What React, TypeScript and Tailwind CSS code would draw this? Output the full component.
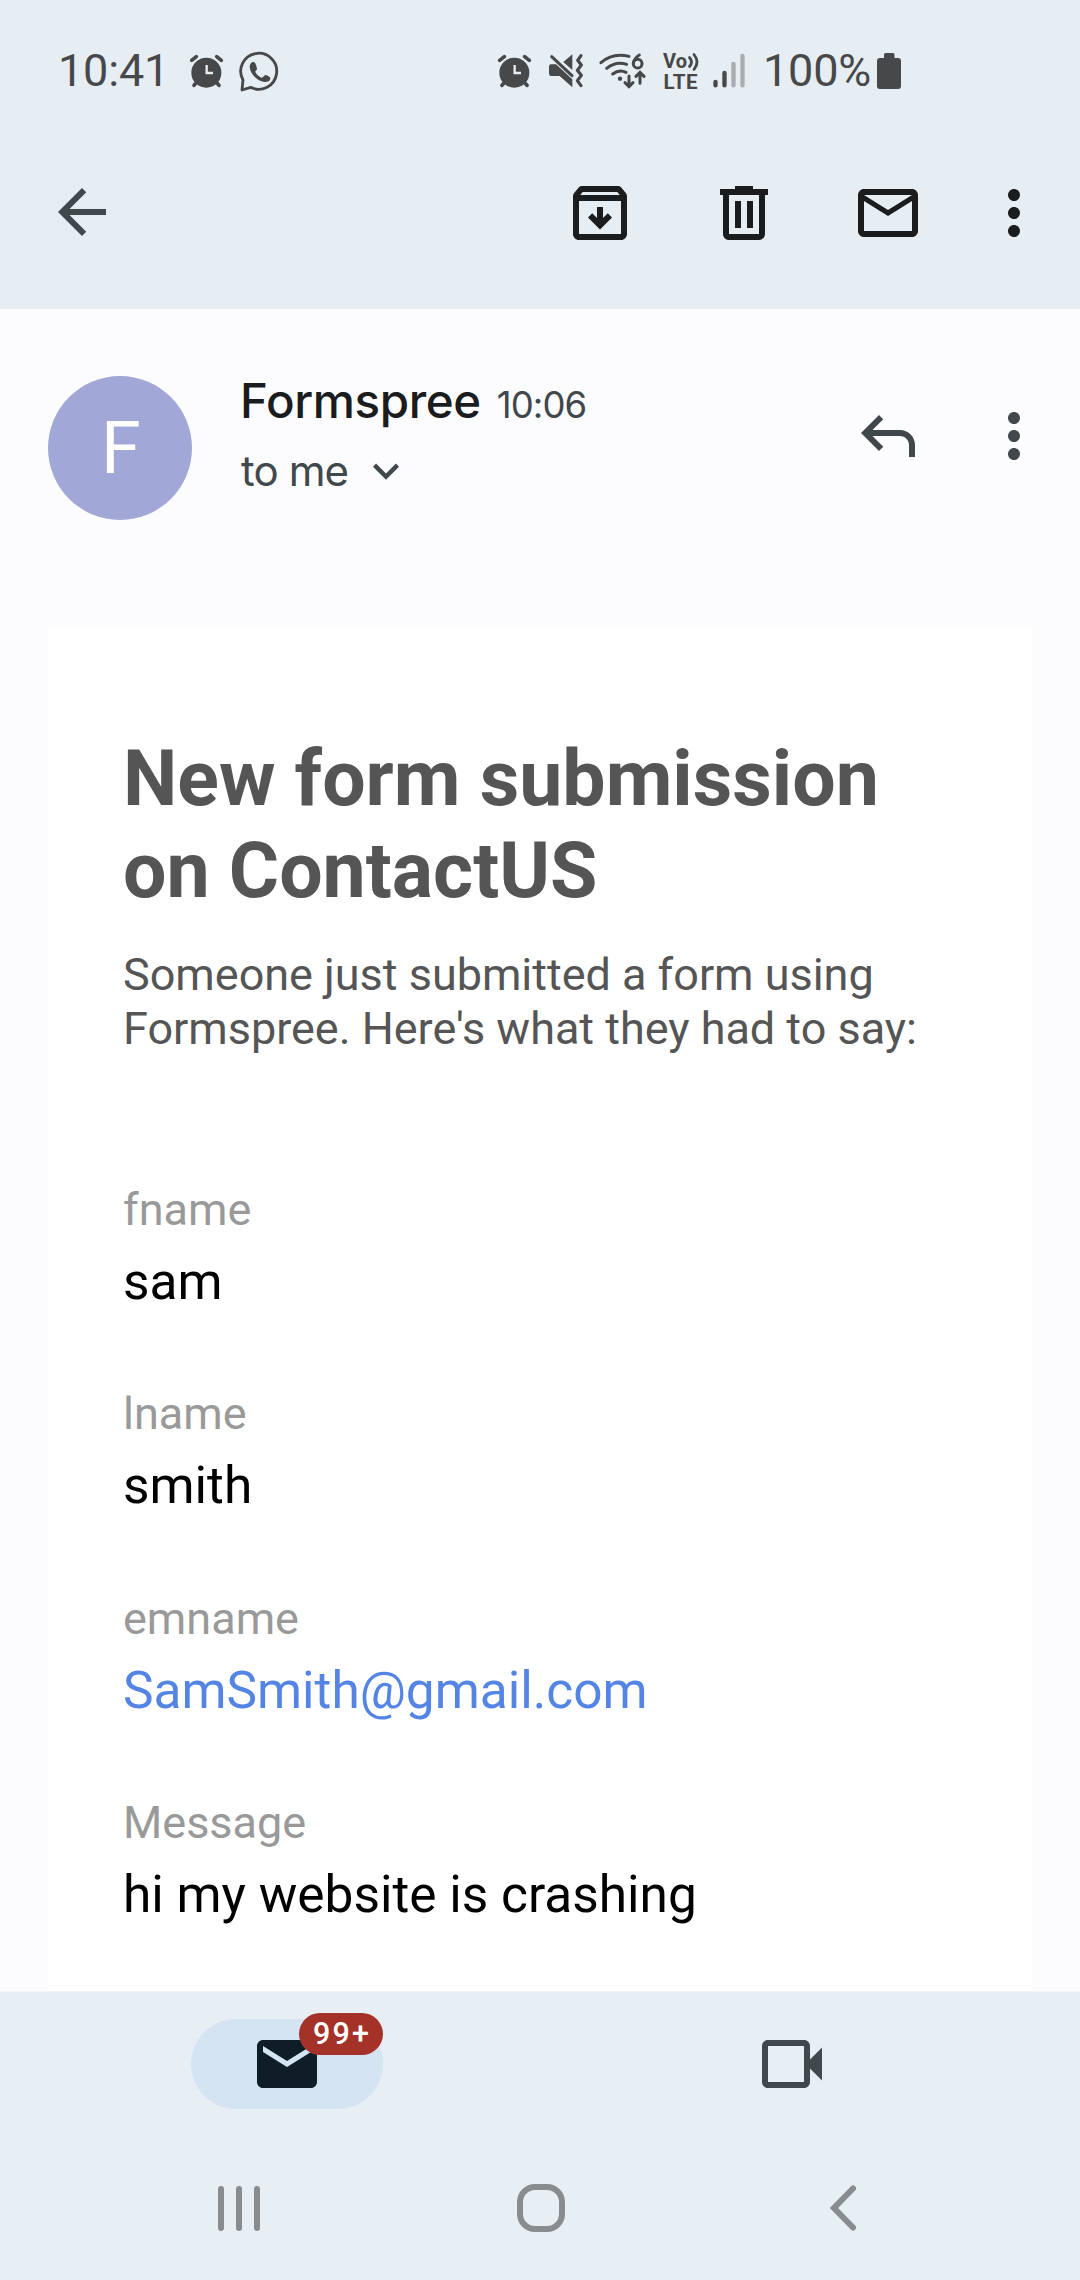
import React from "react";

const AlarmIcon = ({ className = "" }: { className?: string }) => (
  <svg viewBox="45 66 114 114" className={"h-[38px] w-[38px] shrink-0 " + className}>
    <circle cx="103" cy="128" r="45" fill="#464849" />
    <g stroke="#464849" strokeWidth="11" strokeLinecap="round">
      <path d="M59 91L73 80M134 80L148 91M77 154L66 166M130 154L141 166" />
    </g>
    <path d="M104 105V129H123" fill="none" stroke="#e6edf3" strokeWidth="7" />
  </svg>
);

const WhatsappIcon = () => (
  <svg viewBox="594 60 126 129" className="ml-[14px] h-[43px] w-[42px] shrink-0">
    <path
      d="M606 150a54 54 0 1 1 23 22L603 180Z"
      fill="none"
      stroke="#464849"
      strokeWidth="8.5"
      strokeLinejoin="round"
    />
    <path
      d="M636 96c8-2 10 14 12 19 1 5-6 7-5 11 4 9 12 14 18 17 5 2 8-9 13-8 5 1 14 6 14 10-1 12-15 12-21 10-21-5-39-23-41-44 0-7 4-14 10-15Z"
      fill="#464849"
    />
  </svg>
);

const MuteVibrateIcon = () => (
  <svg viewBox="204 66 108 114" className="ml-[15px] h-[38px] w-[36px] shrink-0" fill="#464849">
    <path d="M213 103H228L277 148V172L239 138H214Q207 138 207 131V110Q207 103 213 103Z" />
    <path d="M277 73V120L250 96Z" />
    <path d="M215 80L276 137" stroke="#464849" strokeWidth="9" strokeLinecap="round" />
    <path
      d="M303 77L293 91L304 105L292 121L304 136L292 152L303 167"
      fill="none"
      stroke="#464849"
      strokeWidth="9.5"
      strokeLinecap="round"
      strokeLinejoin="round"
    />
  </svg>
);

const WifiIcon = () => (
  <svg viewBox="354 66 144 120" className="ml-[14px] h-[40px] w-[48px] shrink-0">
    <g fill="none" stroke="#464849" strokeWidth="9" strokeLinecap="round">
      <path d="M363 101Q398 70 447 82" />
      <path d="M380 118Q408 95 440 106" />
      <path d="M398 135Q418 120 438 130" />
      <path d="M447 141V170M435 161L447 173L459 161" />
      <path d="M480 163V133M468 142L480 130L492 142" />
      <path d="M478 78Q464 86 460 102" />
      <circle cx="473" cy="104" r="13" />
    </g>
    <circle cx="420" cy="149" r="6.5" fill="#464849" />
  </svg>
);

const VolteIcon = () => (
  <svg viewBox="-2 -8 46 56" className="mr-[-6px] ml-[15px] h-[56px] w-[46px] shrink-0" fill="#464849">
    <text x="0" y="17" fontFamily="Roboto" fontWeight="700" fontSize="20" textLength="24">Vo</text>
    <text x="0.5" y="38" fontFamily="Roboto" fontWeight="700" fontSize="20.5" textLength="34">LTE</text>
    <path
      d="M26.500 6.500Q30.500 11 26.500 15.500M31 3.500Q37 11 31 18.500"
      fill="none"
      stroke="#464849"
      strokeWidth="2.800"
      strokeLinecap="round"
    />
  </svg>
);

const SignalIcon = () => (
  <svg viewBox="69 66 102 114" className="ml-[11px] h-[38px] w-[34px] shrink-0">
    <g strokeWidth="13" strokeLinecap="round">
      <path d="M79.500 156V166M106.500 129V166" stroke="#464849" />
      <path d="M133.500 102V166M160.500 78V166" stroke="#a9adb0" />
    </g>
  </svg>
);

const BatteryIcon = () => (
  <svg viewBox="0 0 24 36" className="ml-[4px] h-[36px] w-[24px] shrink-0" fill="#464849">
    <path d="M8.500 0H16Q17.500 0 17.500 1.500V5H21Q24 5 24 8V33Q24 36 21 36H3Q0 36 0 33V8Q0 5 3 5H7V1.500Q7 0 8.500 0Z" />
  </svg>
);

const Icon = ({ d, className = "" }: { d: string; className?: string }) => (
  <svg viewBox="0 0 24 24" className={"h-[72px] w-[72px] shrink-0 " + className} fill="currentColor">
    <path d={d} fillRule="evenodd" />
  </svg>
);

const ARROW_BACK = "M20 11H7.83l5.59-5.59L12 4l-8 8 8 8 1.410-1.410L7.830 13H20z";
const ARCHIVE =
  "M20.540 5.230l-1.390-1.680C18.880 3.210 18.470 3 18 3H6c-.47 0-.88.21-1.160.55L3.460 5.230C3.170 5.570 3 6.020 3 6.500V19c0 1.100.9 2 2 2h14c1.100 0 2-.9 2-2V6.500c0-.48-.17-.93-.46-1.270zM6.240 5h11.520l.83 1H5.420zM5 19V8h14v11zM16 13.500l-4 4-4-4 1.410-1.410L11 13.670V10h2v3.670l1.590-1.580z";
const TRASH =
  "M9 3h6v1h5v2h-1v13c0 1.100-.9 2-2 2H7c-1.100 0-2-.9-2-2V6H4V4h5zM7 6v13h10V6zM9 8h2v9H9zM13 8h2v9h-2z";
const MAIL_OUTLINE =
  "M22 6c0-1.100-.9-2-2-2H4c-1.100 0-2 .9-2 2v12c0 1.100.9 2 2 2h16c1.100 0 2-.9 2-2zM20 6l-8 5-8-5zM20 18H4V8l8 5 8-5z";
const MAIL =
  "M20 4H4c-1.100 0-2 .9-2 2v12c0 1.100.9 2 2 2h16c1.100 0 2-.9 2-2V6c0-1.100-.9-2-2-2zM20 8l-8 5-8-5V6l8 5 8-5z";
const MORE =
  "M12 8c1.100 0 2-.9 2-2s-.9-2-2-2-2 .9-2 2 .9 2 2 2zM12 10c-1.100 0-2 .9-2 2s.9 2 2 2 2-.9 2-2-.9-2-2-2zM12 16c-1.100 0-2 .9-2 2s.9 2 2 2 2-.9 2-2-.9-2-2-2z";
const REPLY =
  "M19 19v-4c0-1.660-1.340-3-3-3H6.830l3.590 3.600L9 17 3 11l6-6 1.420 1.400L6.830 10H16c2.760 0 5 2.240 5 5v4z";
const EXPAND = "M16.590 8.590L12 13.170 7.410 8.590 6 10l6 6 6-6z";
const VIDEO =
  "M18 10.500V6c0-1.100-.9-2-2-2H4c-1.100 0-2 .9-2 2v12c0 1.100.9 2 2 2h12c1.100 0 2-.9 2-2v-4.500l4 4v-11zM16 18H4V6h12z";

const FIELDS = [
  { label: "fname", value: "sam" },
  { label: "lname", value: "smith" },
  { label: "emname", value: "SamSmith@gmail.com", link: true },
  { label: "Message", value: "hi my website is crashing" },
];

function StatusBar() {
  return (
    <div className="flex h-[142px] items-center pl-[58px] text-[45px] leading-[54px] text-[#464849]">
      <span className="w-[112px] tracking-[-0.2px] whitespace-nowrap">10:41</span>
      <AlarmIcon className="ml-[17px]" />
      <WhatsappIcon />
      <AlarmIcon className="ml-[214px]" />
      <MuteVibrateIcon />
      <WifiIcon />
      <VolteIcon />
      <SignalIcon />
      <span className="ml-[17px] w-[110px] tracking-[-0.2px] whitespace-nowrap">100%</span>
      <BatteryIcon />
    </div>
  );
}

function Toolbar() {
  return (
    <div className="flex h-[142px] items-center pr-[30px] pl-[46px] text-[#1b1c1d]">
      <Icon d={ARROW_BACK} className="-mt-[2px] text-[#41484b]" />
      <div className="ml-auto flex items-center">
        <Icon d={ARCHIVE} />
        <Icon d={TRASH} className="ml-[72px]" />
        <Icon d={MAIL_OUTLINE} className="ml-[72px]" />
        <Icon d={MORE} className="ml-[54px]" />
      </div>
    </div>
  );
}

function Sender() {
  return (
    <div className="flex h-[319px] items-start pt-[62px] pr-[30px] pl-12 text-[#41484b]">
      <div className="mt-[5px] flex h-36 w-36 items-center justify-center rounded-full bg-[#a1a7d6] pt-[2px] pl-[2px] text-[72px] leading-none text-white">
        F
      </div>
      <div className="ml-[48px] flex flex-col gap-[6px] whitespace-nowrap font-['Inter',sans-serif]">
        <div className="flex items-baseline leading-[60px]">
          <span className="text-[47.5px] font-medium tracking-[-0.4px] text-[#1b1c1d]">Formspree</span>
          <span className="ml-[16px] text-[36.5px] tracking-[-0.9px]">10:06</span>
        </div>
        <div className="flex items-center pl-[1px] leading-[60px]">
          <span className="text-[42px] tracking-[-0.9px]">to me</span>
          <svg viewBox="0 0 24 24" className="ml-[12px] h-[52px] w-[52px]" fill="currentColor">
            <path d={EXPAND} />
          </svg>
        </div>
      </div>
      <div className="mt-[29px] ml-auto flex">
        <Icon d={REPLY} />
        <Icon d={MORE} className="ml-[54px]" />
      </div>
    </div>
  );
}

function Message() {
  return (
    <div className="mx-12 h-[1363px] bg-white pt-[105px] pl-[75px] text-[#555]">
      <h1 className="text-[77px] leading-[92px] font-bold">
        New form submission
        <br />
        on ContactUS
      </h1>
      <p className="mt-[31px] text-[45px] leading-[54px] tracking-[-0.02px]">
        Someone just submitted a form using
        <br />
        Formspree. Here&apos;s what they had to say:
      </p>
      <dl className="mt-[127px] flex flex-col gap-[74.4px]">
        {FIELDS.map((f) => (
          <div key={f.label} className="h-[130px]">
            <dt className="text-[45px] leading-[54px] text-[#999]">{f.label}</dt>
            <dd className={"mt-[14px] text-[51.4px] leading-[62px] " + (f.link ? "text-[#5585e4]" : "text-black")}>
              {f.value}
            </dd>
          </div>
        ))}
      </dl>
    </div>
  );
}

function TabBar() {
  return (
    <div className="flex h-[144px] items-start pt-[27px] pl-[191px]">
      <div className="relative flex h-[90px] w-[192px] items-center justify-center rounded-full bg-[#d4e4f3] text-[#0e1d26]">
        <Icon d={MAIL} />
        <span className="absolute -top-[6px] right-0 flex h-[42px] w-[84px] items-center justify-center rounded-full bg-[#a53228] pt-[1px] pl-[2px] text-[30.5px] leading-none font-medium tracking-[2.2px] text-white">
          99+
        </span>
      </div>
      <Icon d={VIDEO} className="mt-[9px] ml-[373px] text-[#41484b]" />
    </div>
  );
}

function SystemNav() {
  return (
    <div className="flex h-[144px] items-center pl-[218px]">
      <div className="flex gap-[12px]">
        <span className="h-[45px] w-[6px] rounded-full bg-[#898c8e]" />
        <span className="h-[45px] w-[6px] rounded-full bg-[#898c8e]" />
        <span className="h-[45px] w-[6px] rounded-full bg-[#898c8e]" />
      </div>
      <div className="ml-[257px] h-[48px] w-[48px] rounded-[18px] border-[6px] border-[#898c8e]" />
      <svg viewBox="0 0 28 48" className="ml-[264px] h-[48px] w-[28px]">
        <path
          d="M24 4.500L5 24L24 43.500"
          fill="none"
          stroke="#898c8e"
          strokeWidth="6"
          strokeLinecap="round"
        />
      </svg>
    </div>
  );
}

export default function App() {
  return (
    <div className="h-[2280px] w-[1080px] overflow-hidden bg-[#fcfcff] font-['Roboto',sans-serif]">
      <header className="h-[309px] bg-[#e6edf3]">
        <StatusBar />
        <Toolbar />
      </header>
      <main>
        <Sender />
        <Message />
      </main>
      <footer className="h-[289px] border-t border-[#f1f5f8] bg-[#e7eef4]">
        <TabBar />
        <SystemNav />
      </footer>
    </div>
  );
}
